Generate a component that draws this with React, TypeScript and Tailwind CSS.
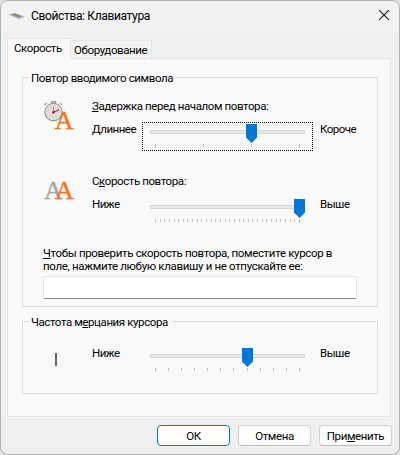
import { ReactNode } from "react";
import clsx from "clsx";

type SliderProps = {
    ticks: number;
    value: number;
    focused?: boolean;
};

function Slider({ ticks, value, focused }: SliderProps) {
    const step = 144 / (ticks - 1);

    return (
        <div
            className={clsx(
                "relative w-[171px] h-[29px] px-[7px] pt-[7px] border border-dotted",
                focused ? "border-black" : "border-transparent"
            )}
        >
            <div className="h-1 bg-[#e7eaea] border border-[#d6d6d6]" />
            <div className="flex justify-between mt-[10px] mx-[5px]">
                {Array.from({ length: ticks }, (_, i) => (
                    <div
                        key={i}
                        className={clsx(
                            "w-px bg-[#c0c0c0]",
                            i === 0 || i === ticks - 1 ? "h-1" : "h-[3px]"
                        )}
                    />
                ))}
            </div>
            <svg
                className="absolute top-px w-[11px] h-[19px]"
                style={{ left: Math.round(7 + value * step) }}
                viewBox="0 0 11 19"
            >
                <path d="M0 0h11v13.5L5.5 19 0 13.5z" fill="#0078d7" />
            </svg>
        </div>
    );
}

type SliderRowProps = SliderProps & {
    min: ReactNode;
    max: ReactNode;
};

function SliderRow({ min, max, ...slider }: SliderRowProps) {
    return (
        <div className="flex h-[30px] tracking-[-0.5px]">
            <span className="w-[50px]">{min}</span>
            <div className="pt-px">
                <Slider {...slider} />
            </div>
            <span className="ml-[7px]">{max}</span>
        </div>
    );
}

type GroupProps = {
    title: ReactNode;
    className?: string;
    children: ReactNode;
};

function Group({ title, className, children }: GroupProps) {
    return (
        <section className={clsx("w-[356px] border border-[#dcdcdc]", className)}>
            <h2 className="w-fit -mt-[8px] ml-[6px] pl-[2px] pr-[3px] bg-[#f9f9f9]">{title}</h2>
            {children}
        </section>
    );
}

function Key({ children }: { children: string }) {
    return (
        <span className="underline decoration-1 underline-offset-1 [text-decoration-skip-ink:none]">
            {children}
        </span>
    );
}

function DelayIcon() {
    return (
        <svg className="w-[34px] h-8" viewBox="0 0 34 32">
            <path d="M10.5 1.5h4v2h-4zM3.5 5l2-2M19 3l2 2" stroke="#999" strokeWidth="1.2" fill="#ccc" />
            <circle cx="12.5" cy="12" r="8.6" fill="#e9e9e9" stroke="#959595" strokeWidth="1.2" />
            <circle cx="12.5" cy="12" r="6.3" fill="#dedede" stroke="#b0b0b0" strokeWidth="1" strokeDasharray="1 2.3" />
            <path d="M12.500 7v5" stroke="#888" />
            <path d="M11.5 13l6.500-3.500" stroke="#e02020" strokeWidth="1.3" />
            <circle cx="12.5" cy="12.3" r="1.4" fill="#d52020" />
            <text x="13.8" y="29" fontSize="26" fill="#f97316" stroke="#f97316" strokeWidth="0.4" className="font-['Liberation_Serif',serif] tracking-normal">
                A
            </text>
        </svg>
    );
}

function SpeedIcon() {
    return (
        <svg className="w-[34px] h-8" viewBox="0 0 34 32">
            <text x="3" y="26" fontSize="26" fill="#a6a6a6" stroke="#a6a6a6" strokeWidth="0.4" className="font-['Liberation_Serif',serif] tracking-normal">
                A
            </text>
            <text x="14" y="26" fontSize="26" fill="#f97316" stroke="#f97316" strokeWidth="0.4" className="font-['Liberation_Serif',serif] tracking-normal">
                A
            </text>
        </svg>
    );
}

function KeyboardIcon() {
    return (
        <svg className="w-4 h-4" viewBox="0 0 16 16">
            <path d="M0 7.5L6 6l9.5 3.5L10 12z" fill="#b5b5b5" />
            <path d="M1.5 7.5L6 6.5l7.5 3-4 1z" fill="#8c8c8c" />
            <path d="M0 8l10 4.2 5.5-2.5" stroke="#d0d0d0" strokeWidth="0.8" fill="none" />
        </svg>
    );
}

function Button({ primary, children }: { primary?: boolean; children: ReactNode }) {
    return (
        <button
            type="button"
            className={clsx(
                "w-[73px] h-[21px] flex justify-center pt-[2px] rounded-[4px] border bg-[#fdfdfd]",
                primary ? "border-[#0078d4]" : "border-[#d0d0d0] border-b-[#bcbcbc]"
            )}
        >
            {children}
        </button>
    );
}

export default function App() {
    return (
        <div className="w-[400px] h-[455px] bg-[#e2e2e2]">
            <div className="w-full h-full overflow-hidden rounded-lg border border-[#b0b0b0] bg-[#f0f0f0] text-black text-[11.5px] leading-4 tracking-[-0.4px] font-['Roboto',sans-serif]">
                <header className="flex h-[30px] pt-[6px] pl-2 bg-[#f3f3f3]">
                    <KeyboardIcon />
                    <h1 className="mt-px ml-[6px] flex-1 text-[12px] leading-4 tracking-[-0.35px]">
                        Свойства: Клавиатура
                    </h1>
                    <svg className="w-[10px] h-[10px] mt-[3px] mr-[10px]" viewBox="0 0 10 10">
                        <path d="M0 0l10 10M10 0L0 10" stroke="#1a1a1a" strokeWidth="1.1" />
                    </svg>
                </header>

                <nav className="flex items-end h-[27px] pl-[6px]">
                    <div className="relative w-16 h-[21px] -mb-px pl-[6px] pt-px bg-[#f9f9f9] border border-b-0 border-[#e5e5e5]">
                        Скорость
                    </div>
                    <div className="w-[81px] h-[18px] pl-[3px] pt-px bg-[#f3f3f3] border border-l-0 border-b-0 border-[#e5e5e5]">
                        Оборудование
                    </div>
                </nav>

                <main className="w-96 h-[359px] ml-[6px] pl-[14px] pt-[18px] bg-[#f9f9f9] border border-[#e5e5e5] shadow-[2px_2px_0_#f3f3f3]">
                    <Group title="Повтор вводимого символа" className="h-[230px]">
                        <div className="flex mt-3">
                            <div className="w-[69px] pl-[18px] pt-[2px]">
                                <DelayIcon />
                            </div>
                            <div>
                                <p className="mb-[7px]">
                                    <Key>З</Key>адержка перед началом повтора:
                                </p>
                                <SliderRow min="Длиннее" max="Короче" ticks={4} value={2} focused />
                            </div>
                        </div>
                        <div className="flex mt-[22px]">
                            <div className="w-[69px] pl-[18px]">
                                <SpeedIcon />
                            </div>
                            <div>
                                <p className="mb-[7px]">
                                    С<Key>к</Key>орость повтора:
                                </p>
                                <SliderRow min="Ниже" max="Выше" ticks={32} value={31} />
                            </div>
                        </div>
                        <p className="mt-[21px] ml-5 leading-[13px] tracking-[-0.33px] whitespace-nowrap">
                            <Key>Ч</Key>тобы проверить скорость повтора, поместите курсор в
                            <br />
                            поле, нажмите любую клавишу и не отпускайте ее:
                        </p>
                        <input
                            type="text"
                            className="block w-[314px] h-[23px] mt-[3px] ml-5 rounded-[2px] bg-white border border-[#e6e6e6] border-b-[#868686]"
                        />
                    </Group>

                    <Group
                        title={
                            <>
                                Частота м<Key>е</Key>рцания курсора
                            </>
                        }
                        className="h-[73px] mt-[14px]"
                    >
                        <div className="flex mt-[15px]">
                            <div className="w-[69px] pl-8 pt-[8px]">
                                <div className="w-[2px] h-[13px] bg-[#666]" />
                            </div>
                            <SliderRow min="Ниже" max="Выше" ticks={12} value={7} />
                        </div>
                    </Group>
                </main>

                <footer className="flex justify-end gap-2 mt-2 pr-[7px]">
                    <Button primary>ОК</Button>
                    <Button>Отмена</Button>
                    <Button>
                        <span>
                            При<Key>м</Key>енить
                        </span>
                    </Button>
                </footer>
            </div>
        </div>
    );
}
